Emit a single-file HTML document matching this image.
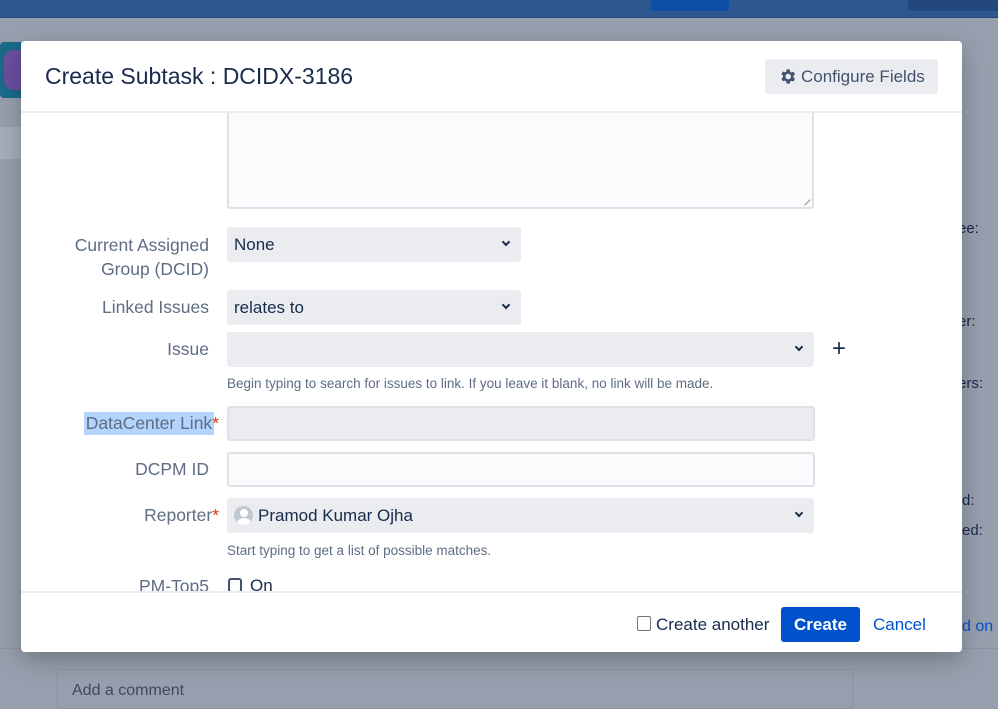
<!DOCTYPE html>
<html><head><meta charset="utf-8"><style>
*{box-sizing:border-box;margin:0;padding:0}
body{width:998px;height:695px;overflow:hidden;background:#979fae;font-family:"Liberation Sans",sans-serif;position:relative;color:#172b4d}
.a{position:absolute}
.top{left:0;top:0;width:998px;height:18px;background:#2e5790;border-bottom:1px solid #23457a}
.modal{left:21px;top:41px;width:941px;height:611px;background:#fff;border-radius:4px;box-shadow:0 8px 24px rgba(0,0,0,.25)}
.lbl{font-size:17.5px;color:#5e6c84;text-align:right;width:188px;left:21px}
.sel{background:#ebecf0;border-radius:3px;height:35px;font-size:17px;padding:8px 7px;color:#172b4d}
.chev{position:absolute;right:12px;top:12px;width:6px;height:6px;border-right:2px solid #172b4d;border-bottom:2px solid #172b4d;transform:rotate(45deg)}
.help{font-size:13.5px;color:#5e6c84;left:227px}
.req{color:#de350b}
</style></head><body>
<div class="a top"></div>
<div class="a" style="left:651px;top:0;width:78px;height:11px;background:#0c4ea8;border-radius:0 0 3px 3px"></div>
<div class="a" style="left:908px;top:0;width:90px;height:11px;background:#24487c;border-radius:0 0 0 3px"></div>
<div class="a" style="left:0;top:42px;width:21px;height:56px;background:#1a6a8a;border-radius:4px 0 0 4px"></div>
<div class="a" style="left:4px;top:50px;width:17px;height:40px;background:#6b4fa0;border-radius:10px 0 0 10px"></div>
<div class="a" style="left:0;top:127px;width:21px;height:32px;background:#a6aebb"></div>
<div class="a" style="left:0;top:648px;width:998px;height:1px;background:#8c94a3"></div>
<div class="a" style="left:57px;top:669px;width:796px;height:40px;border:1px solid #8a93a2;border-radius:3px;background:#979fae"></div>
<div class="a" style="left:72px;top:682px;font-size:16px;color:#3d4a60">Add a comment</div>
<div class="a" style="left:950px;top:184px;font-size:16px;color:#172b4d">e</div>
<div class="a" style="left:958px;top:220px;font-size:15px;color:#172b4d">ee:</div>
<div class="a" style="left:958px;top:313px;font-size:15px;color:#172b4d">er:</div>
<div class="a" style="left:958px;top:375px;font-size:15px;color:#172b4d">ers:</div>
<div class="a" style="left:962px;top:492px;font-size:15px;color:#172b4d">d:</div>
<div class="a" style="left:962px;top:522px;font-size:15px;color:#172b4d">ed:</div>
<div class="a" style="left:962px;top:618px;font-size:16px;color:#0052cc">d on</div>

<div class="a modal"></div>
<div class="a" style="left:45px;top:63px;font-size:23px;color:#172b4d">Create Subtask : DCIDX-3186</div>
<div class="a" style="left:765px;top:59px;width:173px;height:35px;background:#ebecf0;border-radius:3px;font-size:17px;color:#42526e;padding:8px 0 0 36px">Configure Fields</div>
<svg class="a" style="left:778px;top:67px" width="19" height="19" viewBox="0 0 24 24"><path fill="#42526e" d="M19.4 13a7.5 7.5 0 0 0 0-2l2.1-1.6-2-3.5-2.5 1a7.6 7.6 0 0 0-1.7-1L14.9 3h-4l-.4 2.7a7.6 7.6 0 0 0-1.7 1l-2.5-1-2 3.5L6.4 11a7.5 7.5 0 0 0 0 2l-2.1 1.6 2 3.5 2.5-1a7.6 7.6 0 0 0 1.7 1l.4 2.9h4l.4-2.7a7.6 7.6 0 0 0 1.7-1l2.5 1 2-3.5zM12.9 15.5a3.5 3.5 0 1 1 0-7 3.5 3.5 0 0 1 0 7z"/></svg>
<div class="a" style="left:21px;top:111px;width:941px;height:2px;background:#ebecf0"></div>

<div class="a" style="left:227px;top:113px;width:587px;height:96px;border:2px solid #dfe1e6;border-top:none;background:#fafbfc;border-radius:0 0 3px 3px"></div>
<div class="a" style="left:801px;top:196px;width:8px;height:8px;border-bottom:1px solid #888;transform:rotate(-45deg)"></div>

<div class="a lbl" style="top:233px;line-height:24px">Current Assigned<br>Group (DCID)</div>
<div class="a sel" style="left:227px;top:227px;width:294px">None<div class="chev"></div></div>

<div class="a lbl" style="top:297px">Linked Issues</div>
<div class="a sel" style="left:227px;top:290px;width:294px">relates to<div class="chev"></div></div>

<div class="a lbl" style="top:339px">Issue</div>
<div class="a sel" style="left:227px;top:332px;width:587px"><div class="chev"></div></div>
<div class="a" style="left:832px;top:335px;font-size:24px;color:#172b4d">+</div>
<div class="a help" style="top:376px">Begin typing to search for issues to link. If you leave it blank, no link will be made.</div>

<div class="a" style="left:84px;top:412px;height:23px;width:130px;background:#b3d4fc"></div>
<div class="a lbl" style="top:413px;width:198px">DataCenter Link<span class="req">*</span></div>
<div class="a" style="left:227px;top:406px;width:588px;height:35px;border:2px solid #dfe1e6;background:#ebecf0;border-radius:3px"></div>

<div class="a lbl" style="top:459px">DCPM ID</div>
<div class="a" style="left:227px;top:452px;width:588px;height:35px;border:2px solid #dfe1e6;background:#fafbfc;border-radius:3px"></div>

<div class="a lbl" style="top:505px;width:198px">Reporter<span class="req">*</span></div>
<div class="a sel" style="left:227px;top:498px;width:587px;padding-left:31px">Pramod Kumar Ojha<div class="chev"></div></div>
<div class="a" style="left:234px;top:506px;width:19px;height:19px;border-radius:50%;background:#c1c7d0;overflow:hidden"><div style="width:8px;height:8px;border-radius:50%;background:#fff;margin:3px auto 0"></div><div style="width:14px;height:10px;border-radius:50% 50% 0 0;background:#fff;margin:1px auto 0"></div></div>
<div class="a help" style="top:543px">Start typing to get a list of possible matches.</div>

<div class="a lbl" style="top:576px">PM-Top5</div>
<div class="a" style="left:228px;top:578px;width:14px;height:15px;border:2px solid #42526e;border-radius:3px"></div>
<div class="a" style="left:250px;top:576px;font-size:17px">On</div>
<div class="a" style="left:21px;top:591px;width:941px;height:61px;background:#fff;border-top:2px solid #ebecf0;border-radius:0 0 4px 4px"></div>

<div class="a" style="left:637px;top:616px;width:14px;height:15px;border:1px solid #767676;border-radius:2px;background:#fff"></div>
<div class="a" style="left:656px;top:615px;font-size:17px;color:#172b4d">Create another</div>
<div class="a" style="left:781px;top:607px;width:79px;height:35px;background:#0052cc;border-radius:3px;color:#fff;font-size:17px;font-weight:bold;text-align:center;line-height:35px">Create</div>
<div class="a" style="left:873px;top:615px;font-size:17px;color:#0052cc">Cancel</div>
</body></html>
